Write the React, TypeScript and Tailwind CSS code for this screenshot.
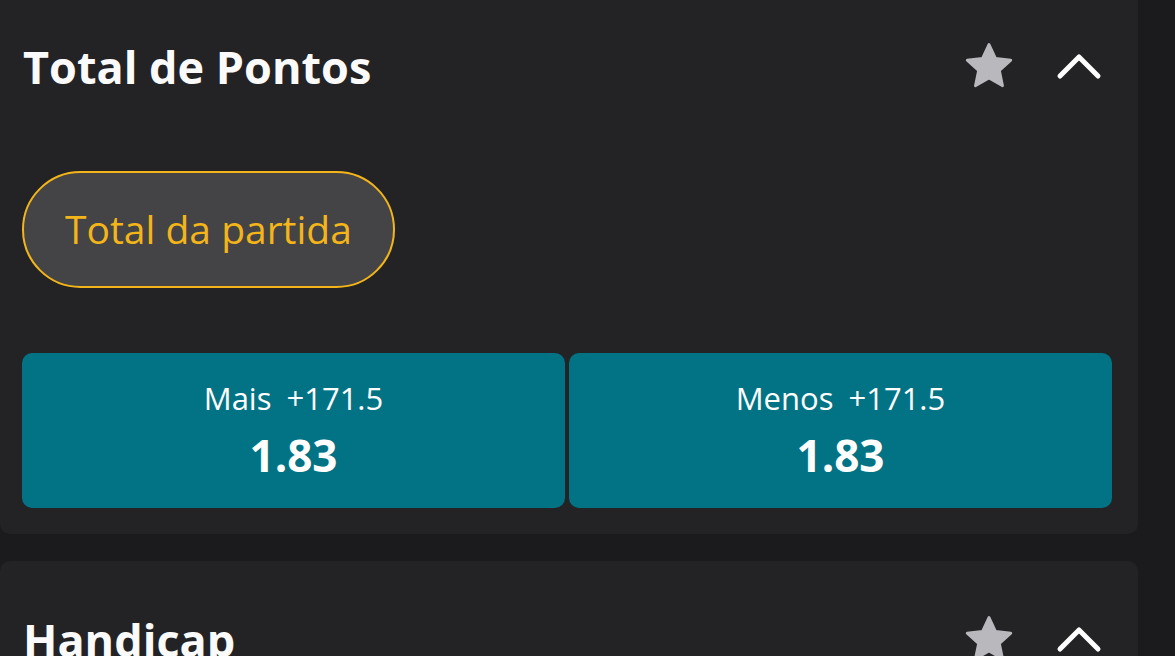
import React from "react"

const font = { fontFamily: '"Open Sans", "Noto Sans", sans-serif' }

function StarIcon() {
  return (
    <svg viewBox="0 0 24 24" className="h-[54px] w-[54px]" aria-hidden>
      <path
        d="M12 2.4l2.9 6.2 6.8.8-5.05 4.65 1.4 6.75L12 17.4l-6.05 3.4 1.4-6.75L2.3 9.4l6.8-.8z"
        fill="#b8b8bd"
        strokeLinejoin="round"
        stroke="#b8b8bd"
        strokeWidth="1.2"
      />
    </svg>
  )
}

function ChevronUp() {
  return (
    <svg viewBox="0 0 46 30" className="h-[30px] w-[46px]" aria-hidden>
      <polyline
        points="4,25 23,6 42,25"
        fill="none"
        stroke="#ffffff"
        strokeWidth="5"
        strokeLinecap="round"
        strokeLinejoin="round"
      />
    </svg>
  )
}

function MarketHeader({ title }: { title: string }) {
  return (
    <div className="flex h-[56px] items-center justify-between">
      <h2 className="pl-px text-[45px] font-bold leading-none text-[#fafafa]">{title}</h2>
      <div className="flex items-center gap-[40px] pr-[10px]">
        <StarIcon />
        <ChevronUp />
      </div>
    </div>
  )
}

function OddButton({ label, line, price }: { label: string; line: string; price: string }) {
  return (
    <button className="flex h-[155px] flex-1 flex-col items-center justify-center rounded-[10px] bg-[#017385] text-white">
      <span className="flex gap-[15px] text-[31px] leading-[36px]">
        <span>{label}</span>
        <span>{line}</span>
      </span>
      <span className="mt-[12px] text-[44px] font-bold leading-[54px]">{price}</span>
    </button>
  )
}

export default function App() {
  return (
    <div className="h-[656px] w-[1175px] overflow-hidden bg-[#1b1b1d]" style={font}>
      <div className="flex w-[1138px] flex-col gap-[27px]">
        <section className="-mt-[12px] rounded-b-[10px] bg-[#232325] pb-[26px] pl-[22px] pr-[26px] pt-[50px]">
          <MarketHeader title="Total de Pontos" />

          <div className="mt-[77px] flex">
            <button className="flex h-[117px] items-center rounded-full border-[2.5px] border-[#f3b519] bg-[#444446] px-[41px] text-[39px] text-[#f3b519]">
              Total da partida
            </button>
          </div>

          <div className="mt-[65px] flex gap-[4px]">
            <OddButton label="Mais" line="+171.5" price="1.83" />
            <OddButton label="Menos" line="+171.5" price="1.83" />
          </div>
        </section>

        <section className="h-[200px] rounded-[10px] bg-[#232325] pl-[22px] pr-[26px] pt-[50px]">
          <MarketHeader title="Handicap" />
        </section>
      </div>
    </div>
  )
}
